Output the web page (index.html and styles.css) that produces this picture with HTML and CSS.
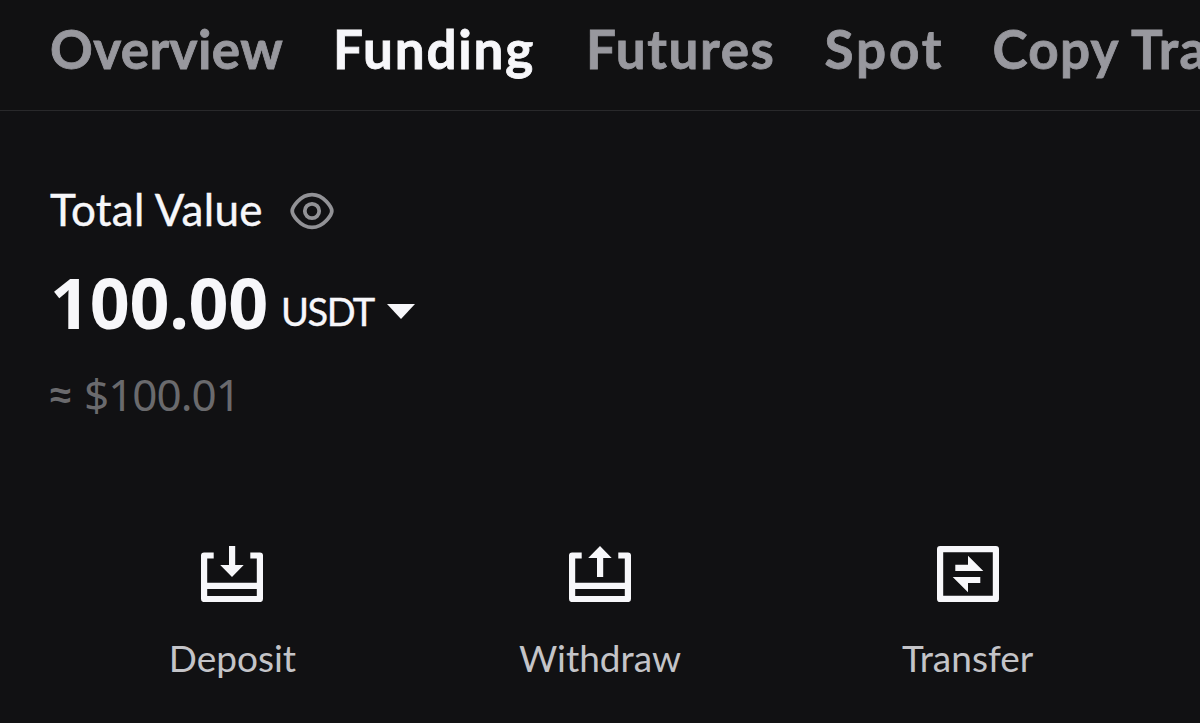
FILE: index.html
```html
<!DOCTYPE html>
<html lang="en">
  <head>
    <meta charset="UTF-8" />
    <meta name="viewport" content="width=device-width, initial-scale=1.0" />
    <title>Funding</title>
    <link rel="stylesheet" href="styles.css">
  </head>
  <body>
    <nav class="tabs">
      <a class="tab overview">Overview</a>
      <a class="tab funding active">Funding</a>
      <a class="tab futures">Futures</a>
      <a class="tab spot">Spot</a>
      <a class="tab copy">Copy Tra</a>
    </nav>

    <section class="balance">
      <div class="label">
        <span class="label-text">Total Value</span>
        <svg class="eye" width="44" height="38" viewBox="0 0 44 38" fill="none" stroke="#929296" stroke-width="3.8">
          <path d="M2.2 19C2.2 15.5 10 2.6 22 2.6S41.8 15.5 41.8 19S34 35.4 22 35.4S2.2 22.5 2.2 19Z" />
          <circle cx="22" cy="19" r="7.2" />
        </svg>
      </div>
      <div class="total">
        <span class="amount">100.00</span>
        <span class="unit">USDT</span>
        <svg class="caret" width="28" height="15" viewBox="0 0 28 15">
          <path d="M0 0H28L14 15Z" fill="#f7f7fa" />
        </svg>
      </div>
      <div class="approx"><span class="sign">≈</span><span>$100.01</span></div>
    </section>

    <section class="actions">
      <div class="action">
        <svg width="62" height="56" viewBox="0 0 62 56" fill="#f7f7fa">
          <path d="M12.7 9.5H3.1V53H58.9V9.5H49.3M3 39.8H59" fill="none" stroke="#f7f7fa" stroke-width="6.2" stroke-linejoin="round" />
          <path d="M28 0H34.2V19H42.7L31 31L19.2 19H28Z" />
        </svg>
        <span class="deposit">Deposit</span>
      </div>
      <div class="action">
        <svg width="62" height="56" viewBox="0 0 62 56" fill="#f7f7fa">
          <path d="M12.7 9.5H3.1V53H58.9V9.5H49.3M3 39.8H59" fill="none" stroke="#f7f7fa" stroke-width="6.2" stroke-linejoin="round" />
          <path d="M31 0L42.7 12H34.2V31H28V12H19.2Z" />
        </svg>
        <span class="withdraw">Withdraw</span>
      </div>
      <div class="action">
        <svg width="62" height="56" viewBox="0 0 62 56" fill="#f7f7fa">
          <rect x="3.1" y="3.1" width="55.8" height="49.8" fill="none" stroke="#f7f7fa" stroke-width="6.2" stroke-linejoin="round" />
          <path d="M18.3 18.7H31V9.7L46.3 24.9H18.3Z" />
          <path d="M43.3 31H15.7L31 46.3V37.1H43.3Z" />
        </svg>
        <span class="transfer">Transfer</span>
      </div>
    </section>
  </body>
</html>
```

FILE: styles.css
```css
body {
  margin: 0;
  height: 723px;
  overflow: hidden;
  background-color: #111113;
  color: #f7f7fa;
  font-family: Lato, "Noto Sans", sans-serif;
}

.tabs {
  display: flex;
  box-sizing: border-box;
  height: 111px;
  padding: 17px 0 0 50px;
  overflow: hidden;
  border-bottom: 1px solid #29292b;
  background-color: #111112;
}

.tab {
  flex: none;
  color: #98989e;
  font-size: 53px;
  font-weight: 700;
  line-height: 64px;
  white-space: nowrap;
  -webkit-text-stroke: 0.8px currentColor;
}

.tab.active {
  color: #f7f7fa;
}

.overview {
  margin-right: 50px;
  letter-spacing: 0.4px;
}

.funding {
  margin-right: 51px;
  letter-spacing: 1.8px;
}

.futures {
  margin-right: 49px;
  letter-spacing: 1.6px;
}

.spot {
  margin-right: 48px;
  letter-spacing: 2.9px;
}

.copy {
  letter-spacing: 1.3px;
}

.balance {
  padding: 73px 50px 0;
}

.label {
  display: flex;
  align-items: center;
  gap: 27px;
  height: 54px;
  font-size: 44px;
  letter-spacing: 0.3px;
  -webkit-text-stroke: 0.4px currentColor;
}

.label-text {
  padding-bottom: 4px;
}

.total {
  display: flex;
  align-items: flex-start;
  height: 100px;
  margin-top: 15px;
}

.amount {
  font-family: "Noto Sans", sans-serif;
  font-size: 70px;
  font-weight: 700;
  line-height: 98px;
  letter-spacing: -0.3px;
}

.unit {
  margin: 35px 0 0 13px;
  font-size: 38px;
  line-height: 46px;
  letter-spacing: -1.5px;
  -webkit-text-stroke: 0.4px currentColor;
}

.caret {
  margin: 51px 0 0 13px;
}

.approx {
  display: flex;
  height: 60px;
  margin-top: 11px;
  color: #6a6a6d;
  font-family: "Noto Sans", sans-serif;
  font-size: 44px;
  line-height: 60px;
  letter-spacing: -1px;
}

.sign {
  width: 34px;
  font-size: 38px;
  font-weight: 600;
  line-height: 58px;
}

.actions {
  display: grid;
  grid-template-columns: repeat(3, 367.6px);
  justify-content: center;
  margin-top: 122px;
}

.action {
  display: flex;
  flex-direction: column;
  align-items: center;
  gap: 34px;
  color: #c4c4c8;
  font-size: 37px;
  line-height: 44px;
}
```
